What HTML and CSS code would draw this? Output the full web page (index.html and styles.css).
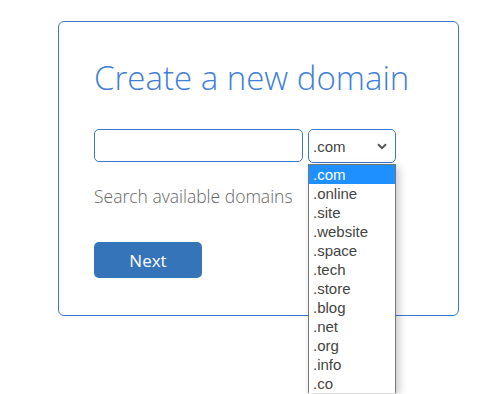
FILE: index.html
```html
<!DOCTYPE html>
<html lang="en" class="page">
<head>
  <meta charset="UTF-8">
  <title>Create a new domain</title>
  <meta name="viewport" content="width=device-width,initial-scale=1.0">
  <link rel="stylesheet" href="styles.css">
</head>
<body class="page__body">
  <section class="card">
    <h1 class="card__title">Create a new domain</h1>
    <form class="domain-form" name="domain">
      <div class="domain-form__row">
        <input class="domain-form__input" type="text" aria-label="Domain name">
        <div class="tld">
          <select class="tld__select" aria-label="Extension">
            <option>.com</option>
          </select>
          <svg class="tld__arrow" width="10" height="7" viewBox="0 0 10 7">
            <path d="M1 1.2 L5 5.2 L9 1.2" fill="none" stroke="#555" stroke-width="2"/>
          </svg>
          <ul class="tld__list">
            <li class="tld__option tld__option--active">.com</li>
            <li class="tld__option">.online</li>
            <li class="tld__option">.site</li>
            <li class="tld__option">.website</li>
            <li class="tld__option">.space</li>
            <li class="tld__option">.tech</li>
            <li class="tld__option">.store</li>
            <li class="tld__option">.blog</li>
            <li class="tld__option">.net</li>
            <li class="tld__option">.org</li>
            <li class="tld__option">.info</li>
            <li class="tld__option">.co</li>
          </ul>
        </div>
      </div>
      <p class="domain-form__hint">Search available domains</p>
      <button class="domain-form__submit" type="button">Next</button>
    </form>
  </section>
</body>
</html>
```

FILE: styles.css
```css
*, *::before, *::after {
  box-sizing: border-box;
}

.page {
  height: 100%;
}

.page__body {
  margin: 0;
  min-height: 100%;
  overflow: hidden;
  background: #fff;
  font-family: "Open Sans", sans-serif;
}

.card {
  width: 401px;
  height: 295px;
  margin: 21px 0 0 58px;
  padding: 34px 35px 0;
  border: 1px solid #3a78d0;
  border-radius: 6px;
}

.card__title {
  margin: 0;
  font-size: 33px;
  line-height: 44px;
  font-weight: 300;
  color: #3f7fd6;
}

.domain-form__row {
  display: flex;
  gap: 5px;
  margin-top: 29px;
}

.domain-form__input {
  width: 209px;
  height: 33px;
  border: 1px solid #3a78d0;
  border-radius: 5px;
  outline: none;
}

.tld {
  position: relative;
  width: 88px;
  height: 34px;
}

.tld__select {
  appearance: none;
  width: 100%;
  height: 100%;
  padding: 0 0 0 4px;
  border: 1px solid #3a78d0;
  border-radius: 5px;
  background: #fff;
  font-family: "Liberation Sans", Arial, sans-serif;
  font-size: 15px;
  color: #444;
}

.tld__arrow {
  position: absolute;
  top: 14px;
  right: 9px;
  pointer-events: none;
}

.tld__list {
  position: absolute;
  top: 35px;
  left: 0;
  width: 88px;
  margin: 0;
  padding: 0;
  list-style: none;
  background: #fff;
  border: 1px solid #767676;
  border-bottom: none;
  box-shadow: 3px 3px 8px rgba(0, 0, 0, 0.22);
  font-family: "Liberation Sans", Arial, sans-serif;
  font-size: 15px;
  color: #444;
}

.tld__option {
  height: 19px;
  line-height: 19px;
  padding-left: 4px;
}

.tld__option--active {
  background: #1e90ff;
  color: #fff;
}

.domain-form__hint {
  margin: 22px 0 0;
  font-size: 17.5px;
  line-height: 22px;
  font-weight: 300;
  color: #666;
}

.domain-form__submit {
  display: block;
  width: 108px;
  height: 36px;
  margin-top: 35px;
  border: none;
  border-radius: 5px;
  background: #3574b9;
  font-family: "Open Sans", sans-serif;
  font-size: 17px;
  font-weight: 400;
  color: #fff;
  cursor: pointer;
}
```
